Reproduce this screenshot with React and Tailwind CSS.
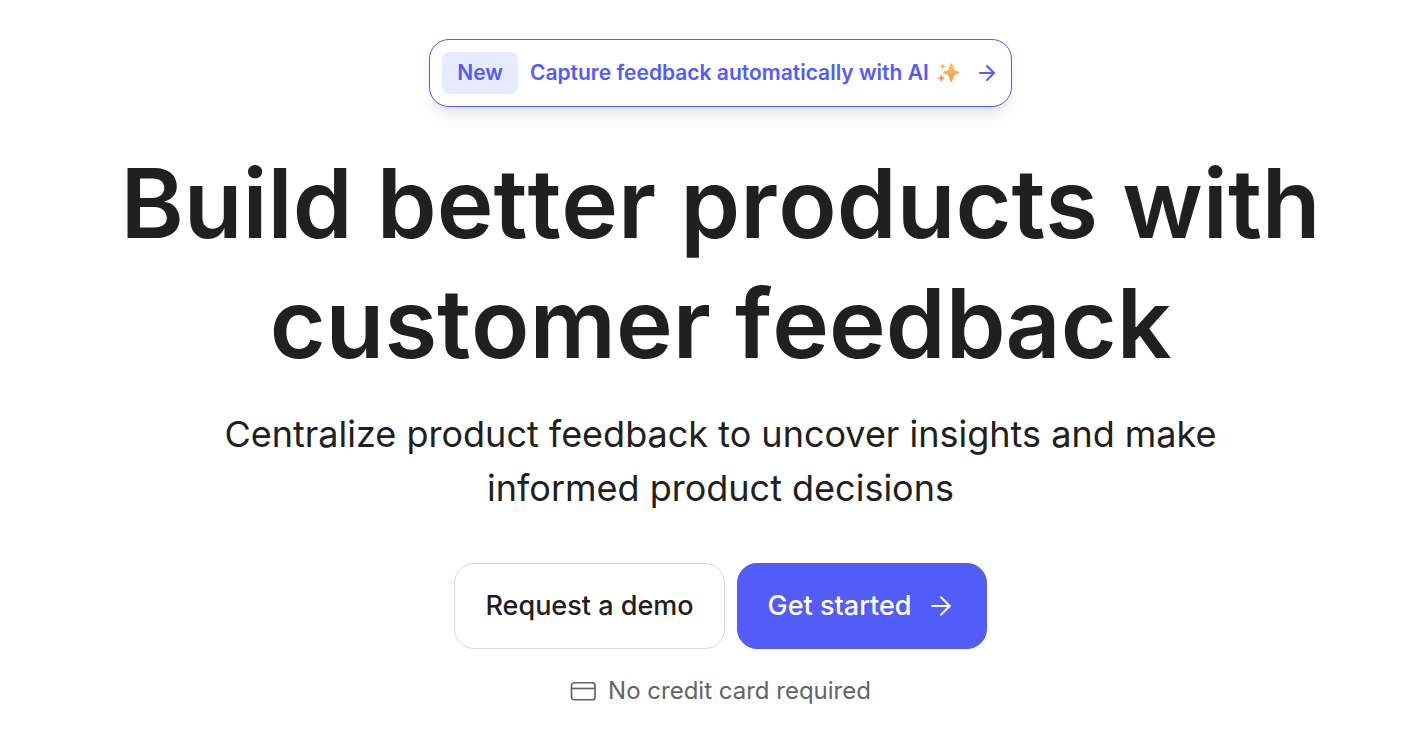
import { ArrowRight } from 'lucide-react';

function Sparkles() {
  return (
    <svg viewBox="0 0 24 24" className="size-6" aria-hidden="true">
      <defs>
        <linearGradient id="spark" gradientUnits="userSpaceOnUse" x1="17" y1="2" x2="6" y2="22">
          <stop offset="0" stopColor="#fbc546" />
          <stop offset="0.5" stopColor="#faab59" />
          <stop offset="1" stopColor="#fb8178" />
        </linearGradient>
      </defs>
      <g fill="url(#spark)">
        <path d="M13.400 2.800c.5-.9 1.300-.9 1.700 0l1.800 5.100c.3.800.7 1.200 1.400 1.500l3.500 1.400c.8.400.8 1 0 1.400l-3.500 1.500c-.7.300-1.100.7-1.400 1.400l-1.800 5.200c-.4.900-1.200.9-1.700 0l-1.800-5.200c-.3-.7-.7-1.100-1.400-1.400l-3.400-1.500c-.8-.4-.8-1 0-1.400l3.400-1.400c.7-.3 1.100-.7 1.400-1.500z" />
        <path d="M5.700 2.300l1 2.100 2.200.9-2.200 1-1 2.200-1-2.200-2.200-1 2.200-.9z" />
        <path d="M4.200 13.200l1.300 2.700 2.700 1.200-2.700 1.200-1.300 2.900-1.200-2.900-2.700-1.200 2.700-1.200z" />
      </g>
    </svg>
  );
}

function Card() {
  return (
    <svg viewBox="0 0 26 20" className="h-5 w-[26px]" fill="none" stroke="currentColor" strokeWidth="1.7" aria-hidden="true">
      <rect x="1.500" y="1.750" width="23.500" height="17" rx="2.500" />
      <path d="M1.500 7.500H25" />
    </svg>
  );
}

export default function App() {
  return (
    <main className="flex flex-col items-center bg-white pt-[39px] pl-[27px] pb-8 text-center font-['Inter',sans-serif] text-[#202020]">
      <a
        href="#ai"
        className="flex items-center rounded-[20px] border border-[#525cf9] bg-white p-3 text-[21px] leading-[42px] font-semibold text-[#525cf9] shadow-lg"
      >
        <span className="rounded-lg bg-[#e8eaff] px-[15px]">New</span>
        <span className="mr-2 ml-3">Capture feedback automatically with AI</span>
        <Sparkles />
        <ArrowRight className="ml-3.5 size-6" strokeWidth={2} />
      </a>

      <h1 className="mt-9 max-w-[1280px] text-8xl leading-[120px] font-semibold [font-kerning:none]">
        Build better products with customer feedback
      </h1>

      <p className="mt-6 max-w-[1080px] text-[36px] leading-[54px]">
        Centralize product feedback to uncover insights and make informed product decisions
      </p>

      <div className="mt-12 flex gap-3 text-[27px] leading-[84px] font-medium">
        <button className="rounded-[20px] border border-[#d9d9d9] px-[30px]">Request a demo</button>
        <button className="flex items-center gap-3.5 rounded-[20px] border border-[#525cf9] bg-[#525cf9] px-[30px] text-white">
          Get started
          <ArrowRight className="size-[30px]" strokeWidth={1.5} />
        </button>
      </div>

      <p className="mt-6 flex items-center gap-3 text-2xl leading-9 text-[#646464]">
        <Card />
        No credit card required
      </p>
    </main>
  );
}
